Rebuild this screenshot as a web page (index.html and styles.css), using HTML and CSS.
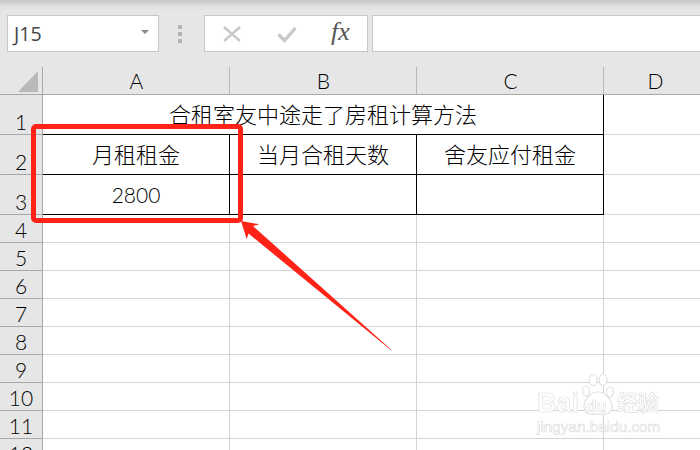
FILE: index.html
```html
<!DOCTYPE html>
<html lang="zh">
<head>
<meta charset="utf-8">
<title>Sheet</title>
<link rel="stylesheet" href="styles.css">
</head>
<body>
<div class="app">
  <div class="toolbar">
    <div class="namebox"><span>J15</span>
      <svg class="caret" width="8" height="4" viewBox="0 0 8 4"><path d="M0 0h8L4 4z" fill="#8a8a8a"/></svg>
    </div>
    <div class="grip"><i></i><i></i><i></i></div>
    <div class="fxbox">
      <svg class="fxicon" width="20" height="18" viewBox="0 0 20 18"><path d="M2 2L18 16M18 2L2 16" stroke="#c9c9c9" stroke-width="2.600" fill="none"/></svg>
      <svg class="fxicon" width="20" height="18" viewBox="0 0 20 18"><path d="M1.500 9.500L7.500 15.500L18.500 3" stroke="#c9c9c9" stroke-width="3.400" fill="none"/></svg>
      <span class="fx">fx</span>
    </div>
    <div class="formula"></div>
  </div>
  <div class="sheet">
    <div class="corner"><svg width="21" height="21" viewBox="0 0 21 21"><path d="M0 21H20V0z" fill="#b9b9b9"/></svg></div>
    <div class="colhead">A</div><div class="colhead">B</div><div class="colhead">C</div><div class="colhead last">D</div>

    <div class="rowhead">1</div>
    <div class="cell merged edge">合租室友中途走了房租计算方法</div>
    <div class="cell"></div>

    <div class="rowhead">2</div>
    <div class="cell boxed">月租租金</div><div class="cell boxed">当月合租天数</div><div class="cell boxed edge">舍友应付租金</div><div class="cell"></div>

    <div class="rowhead">3</div>
    <div class="cell boxed num">2800</div><div class="cell boxed"></div><div class="cell boxed edge"></div><div class="cell"></div>

    <div class="rowhead">4</div><div class="cell"></div><div class="cell"></div><div class="cell"></div><div class="cell"></div>
    <div class="rowhead">5</div><div class="cell"></div><div class="cell"></div><div class="cell"></div><div class="cell"></div>
    <div class="rowhead">6</div><div class="cell"></div><div class="cell"></div><div class="cell"></div><div class="cell"></div>
    <div class="rowhead">7</div><div class="cell"></div><div class="cell"></div><div class="cell"></div><div class="cell"></div>
    <div class="rowhead">8</div><div class="cell"></div><div class="cell"></div><div class="cell"></div><div class="cell"></div>
    <div class="rowhead">9</div><div class="cell"></div><div class="cell"></div><div class="cell"></div><div class="cell"></div>
    <div class="rowhead">10</div><div class="cell"></div><div class="cell"></div><div class="cell"></div><div class="cell"></div>
    <div class="rowhead">11</div><div class="cell"></div><div class="cell"></div><div class="cell"></div><div class="cell"></div>
    <div class="rowhead">12</div><div class="cell"></div><div class="cell"></div><div class="cell"></div><div class="cell"></div>
  </div>

  <div class="highlight"></div>
  <svg class="arrow" width="700" height="450" viewBox="0 0 700 450">
    <path d="M241 221L259.300 224.300L253 226L391 349.500L390.500 349.800L248.500 233.500L246.700 239z" fill="#ff2217"/>
  </svg>

  <div class="watermark">
    <svg class="paw" width="36" height="46" viewBox="0 0 36 46">
      <g fill="#fff" stroke="#e0e0e0" stroke-width="1.200">
        <ellipse cx="5" cy="19" rx="3.500" ry="5"/>
        <ellipse cx="12" cy="8" rx="4" ry="5.500"/>
        <ellipse cx="22" cy="8" rx="4" ry="5.500"/>
        <ellipse cx="29" cy="20" rx="3.500" ry="5"/>
        <path d="M17 20C10 20 3 27 3 35C3 42 10 43 17 42C24 43 31 42 31 35C31 27 24 20 17 20z"/>
      </g>
    </svg>
    <span class="wm-bai">Bai</span>
    <span class="wm-du">du</span>
    <span class="wm-jy">经验</span>
    <span class="wm-url">jingyan.baidu.com</span>
  </div>
</div>
</body>
</html>
```
FILE: styles.css
```css
* { box-sizing: border-box; }
html, body { margin: 0; padding: 0; }
body { width: 700px; height: 450px; overflow: hidden; font-family: "Open Sans", "Noto Sans CJK SC", sans-serif; }
.app { position: relative; width: 700px; height: 450px; overflow: hidden; background: #fff; }

.toolbar {
  height: 67px;
  display: flex;
  align-items: flex-start;
  padding: 15px 0 0 7px;
  background: linear-gradient(#c6c6c6 0, #dedede 6px, #e6e6e6 11px);
}
.namebox, .fxbox, .formula { height: 37px; background: #fff; border: 1px solid #c6c6c6; }
.namebox {
  width: 152px;
  display: flex;
  align-items: center;
  justify-content: space-between;
  padding: 0 9px 0 6px;
  font-size: 19.500px;
  color: #444;
}
.caret { display: block; margin-top: -3px; }
.grip { width: 45px; display: flex; flex-direction: column; align-items: center; gap: 3px; padding: 10px 3px 0 0; }
.grip i { width: 4px; height: 4px; background: #b4b4b4; }
.fxbox { width: 164px; margin-right: 4px; display: flex; align-items: center; padding-left: 17px; gap: 35px; }
.fxicon { display: block; flex: none; }
.fx { font-family: "Liberation Serif", serif; font-style: italic; font-size: 26px; color: #555; margin-left: -1px; margin-top: -3px; }
.formula { flex: 1; border-right: 0; }

.sheet {
  display: grid;
  grid-template-columns: 43px 187px 187px 187px 103px;
  grid-template-rows: 28px 40px 40px 40px repeat(9, 28px);
  font-family: "Lato", "Noto Sans CJK SC", sans-serif;
  font-weight: 300;
  color: #000;
}
.corner, .colhead, .rowhead { background: #e6e6e6; }
.corner { border-right: 1px solid #a8a8a8; border-bottom: 1px solid #a8a8a8; display: flex; align-items: flex-end; padding: 0 0 2px 18px; }
.corner svg { display: block; flex: none; }
.colhead {
  display: flex;
  align-items: flex-end;
  justify-content: center;
  font-size: 21px;
  line-height: 26px;
  border-bottom: 1px solid #a8a8a8;
  position: relative;
}
.colhead::after { content: ""; position: absolute; right: 0; top: 0; bottom: 0; width: 1px; background: #b8b8b8; }
.rowhead {
  display: flex;
  align-items: flex-end;
  justify-content: center;
  font-size: 21px;
  line-height: 24px;
  border-right: 1px solid #a8a8a8;
  border-bottom: 1px solid #a8a8a8;
}
.cell {
  display: flex;
  align-items: flex-end;
  justify-content: center;
  font-size: 22px;
  line-height: 38px;
  white-space: nowrap;
  border-right: 1px solid #d4d4d4;
  border-bottom: 1px solid #d4d4d4;
}
.merged { grid-column: span 3; border-right-color: #000; border-bottom-color: #000; }
.boxed { border-right-color: #000; border-bottom-color: #000; }
.edge { border-right-color: #000; }
.num { font-size: 21px; }

.highlight {
  position: absolute;
  left: 31px;
  top: 124px;
  width: 212px;
  height: 99px;
  border: 5px solid #ff2217;
  border-radius: 5px;
}
.arrow { position: absolute; left: 0; top: 0; }

.watermark { position: absolute; left: 530px; top: 370px; width: 140px; height: 70px; color: #fff; -webkit-text-stroke: 0.7px #e0e0e0; font-family: "Liberation Sans", "Noto Sans CJK SC", sans-serif; filter: blur(0.4px); }
.watermark span { position: absolute; white-space: nowrap; }
.paw { position: absolute; left: 51px; top: 2px; }
.wm-bai { left: 7px; top: 18px; font-size: 27px; line-height: 30px; font-weight: bold; }
.wm-du { left: 56px; top: 27px; font-size: 17px; line-height: 20px; font-weight: bold; }
.wm-jy { left: 87px; top: 21px; font-size: 21px; line-height: 24px; font-weight: bold; }
.wm-url { left: 7px; top: 49px; font-size: 15.300px; line-height: 16px; }
```
